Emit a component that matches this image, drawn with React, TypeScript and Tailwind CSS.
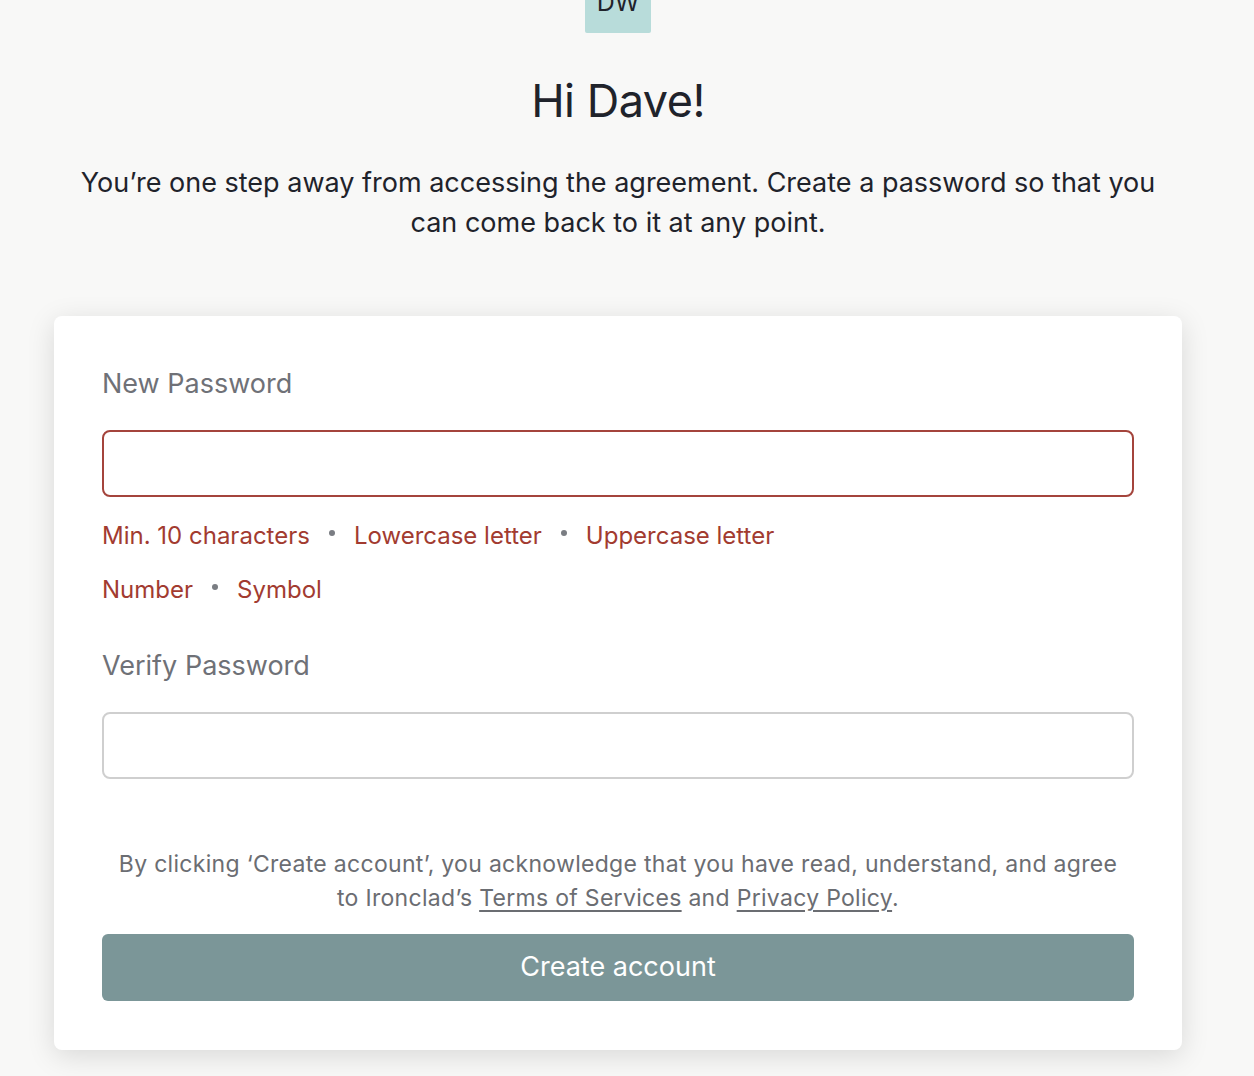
import React from "react";

const Dot = () => <span className="mx-[19px] inline-block h-[6px] w-[6px] rounded-full bg-[#7a7d83] relative top-[-3px]" />;

export default function App() {
  return (
    <div className="min-h-[1076px] w-full bg-[#f8f8f7] overflow-hidden" style={{ fontFamily: "Inter, 'Noto Sans', sans-serif" }}>
      <div className="flex w-[1236px] flex-col items-center">
        <div className="mt-[-33px] flex h-[66px] w-[66px] items-center justify-center rounded-[2px] bg-[#b8dcda] text-[25px] text-[#1f232b]">
          <span className="relative top-[3px]">DW</span>
        </div>
        <h1 className="mt-[41px] text-[45px] leading-[53px] text-[#1f232b] tracking-[-0.5px]">Hi Dave!</h1>
        <p className="mt-[36px] w-[1100px] text-center text-[27px] leading-[40px] text-[#1f232b]">
          You’re one step away from accessing the agreement. Create a password so that you can come back to it at any point.
        </p>
        <div className="mt-[73px] w-[1128px] rounded-[8px] bg-white px-[48px] pt-[48px] pb-[49px] shadow-[0_6px_28px_rgba(0,0,0,0.13)]">
          <label className="block text-[27px] leading-[40px] text-[#6f7177]">New Password</label>
          <div className="mt-[26px] h-[67px] rounded-[8px] border-2 border-[#a4443c] bg-white" />
          <div className="mt-[19px] flex items-center text-[24px] leading-[40px] text-[#a23b30]">
            <span>Min. 10 characters</span>
            <Dot />
            <span>Lowercase letter</span>
            <Dot />
            <span>Uppercase letter</span>
          </div>
          <div className="mt-[14px] flex items-center text-[24px] leading-[40px] text-[#a23b30]">
            <span>Number</span>
            <Dot />
            <span>Symbol</span>
          </div>
          <label className="mt-[36px] block text-[27px] leading-[40px] text-[#6f7177]">Verify Password</label>
          <div className="mt-[26px] h-[67px] rounded-[8px] border-2 border-[#cfcfcf] bg-white" />
          <p className="mt-[68px] px-[8px] text-center text-[23px] leading-[34px] tracking-[0.3px] text-[#6b6d72]">
            By clicking ‘Create account’, you acknowledge that you have read, understand, and agree to Ironclad’s{" "}
            <span className="underline underline-offset-[4px]">Terms of Services</span> and{" "}
            <span className="underline underline-offset-[4px]">Privacy Policy</span>.
          </p>
          <button className="mt-[19px] flex h-[67px] w-full items-center justify-center rounded-[6px] bg-[#7b9698] text-[27px] text-white">
            Create account
          </button>
        </div>
      </div>
    </div>
  );
}
